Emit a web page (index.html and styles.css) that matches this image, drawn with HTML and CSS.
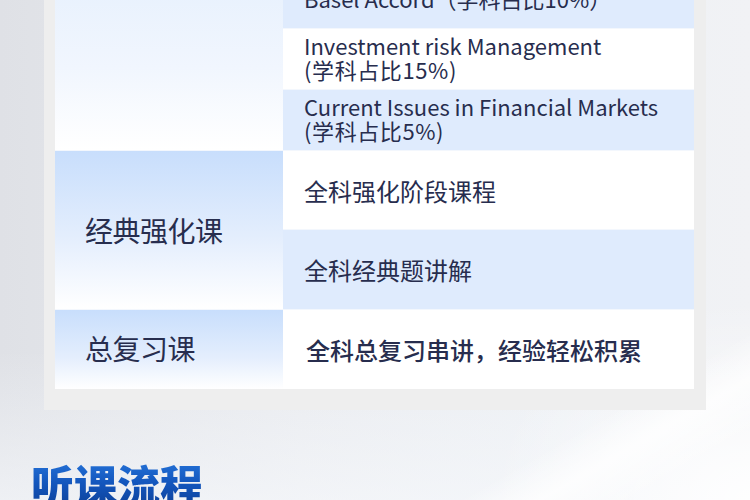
FILE: index.html
```html
<!DOCTYPE html>
<html lang="zh-CN">
<head>
<meta charset="utf-8">
<link rel="stylesheet" href="styles.css">
</head>
<body>
<div class="page">
  <div class="frame">
    <div class="table">
      <div class="label label-top"></div>
      <div class="cell blue">Basel Accord（学科占比10%）</div>
      <div class="cell white two"><div class="txt">Investment risk Management<br><span class="pct">(学科占比15%)</span></div></div>
      <div class="cell blue two"><div class="txt">Current Issues in Financial Markets<br><span class="pct">(学科占比5%)</span></div></div>
      <div class="label label-mid">经典强化课</div>
      <div class="cell white big">全科强化阶段课程</div>
      <div class="cell blue big">全科经典题讲解</div>
      <div class="label label-end">总复习课</div>
      <div class="cell white big strong">全科总复习串讲，经验轻松积累</div>
    </div>
  </div>
  <h2 class="title">听课流程</h2>
</div>
</body>
</html>
```

FILE: styles.css
```css
* { box-sizing: border-box; }
html, body { margin: 0; padding: 0; }
body {
  width: 750px;
  height: 500px;
  overflow: hidden;
  font-family: "Noto Sans CJK SC", "Noto Sans", sans-serif;
}
.page {
  width: 750px;
  height: 500px;
  overflow: hidden;
  background:
    linear-gradient(150deg, rgba(255,255,255,0) 0%, rgba(255,255,255,0) 82%, rgba(255,255,255,0.75) 87%, rgba(255,255,255,0) 93%),
    radial-gradient(ellipse 260px 200px at 100% 100%, rgba(255,255,255,0.9) 0%, rgba(255,255,255,0) 100%),
    linear-gradient(180deg, rgba(255,255,255,0) 0%, rgba(255,255,255,0) 70%, rgba(248,250,253,0.6) 100%),
    linear-gradient(90deg, #dfe1e6 0%, #e9ebef 40%, #edf0f4 75%, #f1f2f5 100%);
  background-color: #eceef2;
}
.frame {
  margin: -32px 0 0 44px;
  width: 662px;
  padding: 0 12px 21px 11px;
  background: #eeeeee;
}
.table {
  display: grid;
  grid-template-columns: 228px 411px;
  grid-template-rows: 60px 60px 60px 78px 79px 79px;
  row-gap: 1px;
  background: #f3f7fd;
  color: #272d4e;
}
.label {
  grid-column: 1;
  display: flex;
  align-items: center;
  padding-left: 30px;
  font-size: 28px;
  letter-spacing: -0.5px;
}
.label-top {
  grid-row: 1 / span 3;
  background: linear-gradient(180deg, #e6f0fd 0%, #f1f6fe 55%, #ffffff 100%);
}
.label-mid {
  grid-row: 4 / span 2;
  background: linear-gradient(180deg, #c8defc 0%, #e4eefd 55%, #ffffff 100%);
}
.label-end {
  grid-row: 6;
  background: linear-gradient(180deg, #c8defc 0%, #e4eefd 60%, #ffffff 100%);
  padding-bottom: 3px;
}
.cell {
  grid-column: 2;
  display: flex;
  align-items: center;
  padding-left: 21px;
  font-size: 22px;
  line-height: 25px;
}
.cell.two { padding-bottom: 4px; line-height: 24px; }
.pct { letter-spacing: 0.6px; }
.cell.big { font-size: 24px; }
.cell.strong { font-weight: 500; padding-left: 23px; }
.blue { background: #dfebfd; }
.white { background: #ffffff; }
.title {
  margin: 43px 0 0 31px;
  font-size: 43px;
  line-height: 60px;
  font-weight: 900;
  letter-spacing: 0;
  background: linear-gradient(180deg, #2a7be0 0%, #1356bd 50%, #0c3c90 100%);
  -webkit-background-clip: text;
  background-clip: text;
  color: transparent;
}
```
